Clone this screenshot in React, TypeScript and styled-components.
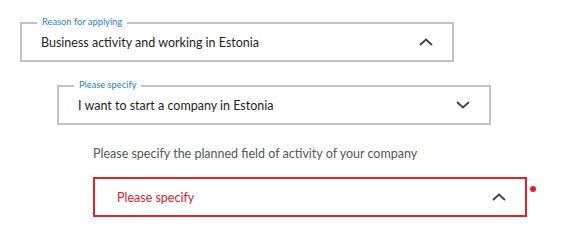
import React from "react";
import styled, { createGlobalStyle } from "styled-components";

const GlobalStyle = createGlobalStyle`
  html, body {
    margin: 0;
    padding: 0;
    background: #ffffff;
  }
  body {
    font-family: Lato, "Noto Sans", Arial, sans-serif;
  }
`;

const Page = styled.div`
  width: 572px;
  height: 234px;
  padding-top: 22px;
  box-sizing: border-box;
  display: flex;
  flex-direction: column;
`;

const Indent = styled.div<{ $left: number; $top?: number }>`
  margin-left: ${(p) => p.$left}px;
  margin-top: ${(p) => p.$top ?? 0}px;
  display: flex;
  align-items: flex-start;
`;

const SelectBox = styled.div<{ $error?: boolean }>`
  position: relative;
  width: 434px;
  height: 40px;
  box-sizing: border-box;
  border: 2px solid ${(p) => (p.$error ? "#e5202a" : "#c3c3c3")};
  display: flex;
  align-items: center;
  justify-content: space-between;
  padding: 0 19px 0 ${(p) => (p.$error ? 22 : 19)}px;
  background: #fff;
`;

const Legend = styled.span`
  position: absolute;
  top: -9px;
  left: 15px;
  padding: 0 5px;
  background: #fff;
  color: #2a83d6;
  font-size: 9.3px;
  line-height: 14px;
`;

const Value = styled.span<{ $error?: boolean }>`
  font-size: 12.5px;
  color: ${(p) => (p.$error ? "#e5202a" : "#1f1f24")};
`;

const Question = styled.p`
  margin: 0;
  font-size: 12.5px;
  color: #55585e;
`;

const ErrorDot = styled.span`
  width: 6px;
  height: 6px;
  border-radius: 50%;
  background: #e5202a;
  margin: 9px 0 0 3px;
`;

const Chevron = ({ up }: { up?: boolean }) => (
  <svg width="14" height="8" viewBox="0 0 14 8" fill="none">
    <path
      d={up ? "M1 7 L7 1.5 L13 7" : "M1 1 L7 6.5 L13 1"}
      stroke="#45464f"
      strokeWidth="2"
    />
  </svg>
);

type FieldProps = {
  legend?: string;
  value: string;
  up?: boolean;
  error?: boolean;
};

const Field = ({ legend, value, up, error }: FieldProps) => (
  <SelectBox $error={error}>
    {legend && <Legend>{legend}</Legend>}
    <Value $error={error}>{value}</Value>
    <Chevron up={up} />
  </SelectBox>
);

export default function App() {
  return (
    <Page>
      <GlobalStyle />
      <Indent $left={20}>
        <Field legend="Reason for applying" value="Business activity and working in Estonia" up />
      </Indent>
      <Indent $left={57} $top={23}>
        <Field legend="Please specify" value="I want to start a company in Estonia" />
      </Indent>
      <Indent $left={93} $top={21}>
        <Question>Please specify the planned field of activity of your company</Question>
      </Indent>
      <Indent $left={93} $top={16}>
        <Field value="Please specify" up error />
        <ErrorDot />
      </Indent>
    </Page>
  );
}
